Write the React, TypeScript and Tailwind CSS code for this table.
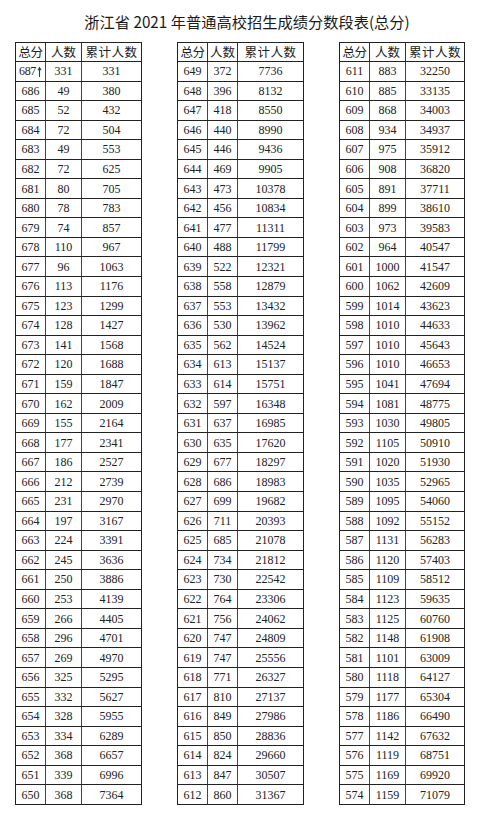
type Row = [string, number, number];

const left: Row[] = [
  ["687↑", 331, 331], ["686", 49, 380], ["685", 52, 432], ["684", 72, 504],
  ["683", 49, 553], ["682", 72, 625], ["681", 80, 705], ["680", 78, 783],
  ["679", 74, 857], ["678", 110, 967], ["677", 96, 1063], ["676", 113, 1176],
  ["675", 123, 1299], ["674", 128, 1427], ["673", 141, 1568], ["672", 120, 1688],
  ["671", 159, 1847], ["670", 162, 2009], ["669", 155, 2164], ["668", 177, 2341],
  ["667", 186, 2527], ["666", 212, 2739], ["665", 231, 2970], ["664", 197, 3167],
  ["663", 224, 3391], ["662", 245, 3636], ["661", 250, 3886], ["660", 253, 4139],
  ["659", 266, 4405], ["658", 296, 4701], ["657", 269, 4970], ["656", 325, 5295],
  ["655", 332, 5627], ["654", 328, 5955], ["653", 334, 6289], ["652", 368, 6657],
  ["651", 339, 6996], ["650", 368, 7364],
];

const middle: Row[] = [
  ["649", 372, 7736], ["648", 396, 8132], ["647", 418, 8550], ["646", 440, 8990],
  ["645", 446, 9436], ["644", 469, 9905], ["643", 473, 10378], ["642", 456, 10834],
  ["641", 477, 11311], ["640", 488, 11799], ["639", 522, 12321], ["638", 558, 12879],
  ["637", 553, 13432], ["636", 530, 13962], ["635", 562, 14524], ["634", 613, 15137],
  ["633", 614, 15751], ["632", 597, 16348], ["631", 637, 16985], ["630", 635, 17620],
  ["629", 677, 18297], ["628", 686, 18983], ["627", 699, 19682], ["626", 711, 20393],
  ["625", 685, 21078], ["624", 734, 21812], ["623", 730, 22542], ["622", 764, 23306],
  ["621", 756, 24062], ["620", 747, 24809], ["619", 747, 25556], ["618", 771, 26327],
  ["617", 810, 27137], ["616", 849, 27986], ["615", 850, 28836], ["614", 824, 29660],
  ["613", 847, 30507], ["612", 860, 31367],
];

const right: Row[] = [
  ["611", 883, 32250], ["610", 885, 33135], ["609", 868, 34003], ["608", 934, 34937],
  ["607", 975, 35912], ["606", 908, 36820], ["605", 891, 37711], ["604", 899, 38610],
  ["603", 973, 39583], ["602", 964, 40547], ["601", 1000, 41547], ["600", 1062, 42609],
  ["599", 1014, 43623], ["598", 1010, 44633], ["597", 1010, 45643], ["596", 1010, 46653],
  ["595", 1041, 47694], ["594", 1081, 48775], ["593", 1030, 49805], ["592", 1105, 50910],
  ["591", 1020, 51930], ["590", 1035, 52965], ["589", 1095, 54060], ["588", 1092, 55152],
  ["587", 1131, 56283], ["586", 1120, 57403], ["585", 1109, 58512], ["584", 1123, 59635],
  ["583", 1125, 60760], ["582", 1148, 61908], ["581", 1101, 63009], ["580", 1118, 64127],
  ["579", 1177, 65304], ["578", 1186, 66490], ["577", 1142, 67632], ["576", 1119, 68751],
  ["575", 1169, 69920], ["574", 1159, 71079],
];

// column widths per table (score | count | cumulative), borders included in first two
const widths = [
  ["w-[30px]", "w-[36px]", "w-[59px]"],
  ["w-[30px]", "w-[30px]", "w-[65px]"],
  ["w-[30px]", "w-[36px]", "w-[58px]"],
];

// the "and above" mark after the top score
function UpArrow() {
  return (
    <svg width="5" height="11" viewBox="0 0 5 11" className="ml-[1px] shrink-0">
      <path d="M2.5 1.5V11" stroke="#1f3b6e" strokeWidth="1.1" />
      <path d="M0.4 4.2L2.5 0.6L4.6 4.2Z" fill="#1f3b6e" />
    </svg>
  );
}

function ScoreTable({ rows, cols }: { rows: Row[]; cols: string[] }) {
  return (
    <div className="border border-[#222] bg-white">
      {/* header */}
      <div className="flex h-[18px] items-stretch font-['Noto_Sans_CJK_SC',sans-serif] text-[12.5px] leading-none text-[#222]">
        <div className={`${cols[0]} flex items-center justify-center border-r border-[#333] tracking-[-0.5px]`}>总分</div>
        <div className={`${cols[1]} flex items-center justify-center border-r border-[#333]`}>人数</div>
        <div className={`${cols[2]} flex items-center justify-center tracking-[0.5px]`}>累计人数</div>
      </div>

      {rows.map(([score, count, total]) => (
        <div
          key={score}
          className="flex h-[19.55px] border-t border-[#222] font-['Liberation_Serif',serif] text-[12px] leading-none text-[#222]"
        >
          <div className={`${cols[0]} flex items-center justify-center border-r border-[#444] whitespace-nowrap`}>
            {score.endsWith("↑") ? (
              <span className="flex items-center tracking-[-0.3px]">
                {score.slice(0, -1)}
                <UpArrow />
              </span>
            ) : (
              score
            )}
          </div>
          <div className={`${cols[1]} flex items-center justify-center border-r border-[#444]`}>{count}</div>
          <div className={`${cols[2]} flex items-center justify-center`}>{total}</div>
        </div>
      ))}
    </div>
  );
}

export default function App() {
  return (
    <div className="h-[815px] w-[480px] bg-white">
      <h1 className="flex h-[42px] items-center justify-center pl-[14px] font-['Noto_Sans_CJK_SC',sans-serif] text-[15.25px] font-normal text-[#1a1a1a]">
        浙江省 2021 年普通高校招生成绩分数段表(总分)
      </h1>
      <div className="flex gap-[35px] pl-[15px]">
        <ScoreTable rows={left} cols={widths[0]} />
        <ScoreTable rows={middle} cols={widths[1]} />
        <ScoreTable rows={right} cols={widths[2]} />
      </div>
    </div>
  );
}
